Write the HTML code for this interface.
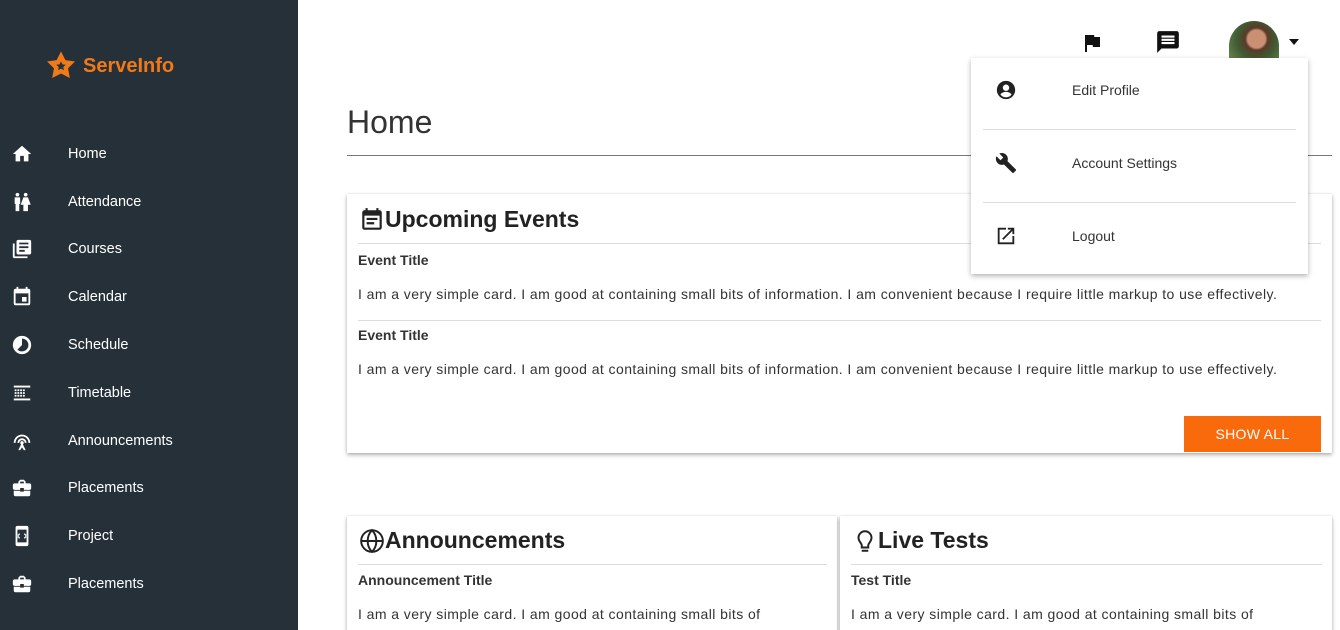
<!DOCTYPE html>
<html style="width:1340px;height:630px;overflow:hidden"><head><style>
*{box-sizing:border-box;margin:0;padding:0}
body{width:1340px;height:630px;overflow:hidden;background:#fff;font-family:"Liberation Sans",sans-serif;position:relative;color:#222}
.side{position:absolute;left:0;top:0;width:298px;height:630px;background:#263038}
.logo{position:absolute;left:45px;top:50px;display:flex;align-items:center;color:#f07a1a;font-weight:bold;font-size:20px}
.nav{position:absolute;left:0;top:130px}
.nav div{height:47.8px;display:flex;align-items:center;color:#fff;font-size:14.5px;position:relative}
.nav svg{position:absolute;left:11px;width:22px;height:22px;fill:#fff}
.nav span{position:absolute;left:68px}
.top svg{position:absolute}
h1{position:absolute;left:347px;top:104px;font-weight:normal;font-size:32px;color:#333}
.hr{position:absolute;left:347px;top:155px;width:985px;height:1px;background:#777}
.card{position:absolute;background:#fff;box-shadow:0 2px 4px rgba(0,0,0,.3),0 0 2px rgba(0,0,0,.1)}
.ct{position:absolute;left:12px;font-weight:bold;font-size:23px;display:flex;align-items:center;color:#222}
.sep{position:absolute;left:11px;height:1px;background:#ddd}
.t{position:absolute;left:11px;font-weight:bold;font-size:14px;color:#333}
.p{position:absolute;left:11px;font-size:14px;color:#333;white-space:nowrap;letter-spacing:.43px}
.btn{position:absolute;right:11px;bottom:0;width:137px;height:36px;background:#f96a0c;color:#fff;font-size:14px;display:flex;align-items:center;justify-content:center;letter-spacing:.3px}
.menu{position:absolute;left:971px;top:58px;width:337px;height:216px;background:#fff;box-shadow:0 2px 5px rgba(0,0,0,.3)}
.mi{position:absolute;left:0;width:100%;height:73px;font-size:14px;color:#333}
.mi span{position:absolute;left:101px;top:24px}
.mi svg{position:absolute;left:24px;top:21px;width:22px;height:22px}
.ms{position:absolute;left:12px;width:313px;height:1px;background:#ddd}
</style></head><body>
<div class="side">
 <div class="logo"><svg width="32" height="32" viewBox="0 0 24 24"><path fill="#f07a1a" d="M12 1l3.3 6.6 7.2 1-5.2 5.1 1.3 7.3L12 17.6 5.4 21l1.3-7.3L1.5 8.6l7.2-1z"/><path fill="#263038" d="M12 8.5l1.1 2.3 2.4.3-1.8 1.7.5 2.4-2.2-1.2-2.2 1.2.5-2.4-1.8-1.7 2.4-.3z"/></svg><span style="margin-left:6px">ServeInfo</span></div>
 <div class="nav">
  <div><svg viewBox="0 0 24 24"><path d="M10 20v-6h4v6h5v-8h3L12 3 2 12h3v8z"/></svg><span>Home</span></div>
  <div><svg viewBox="0 0 24 24"><circle cx="7" cy="4" r="2"/><circle cx="16" cy="4" r="2"/><path d="M4 7h6v7H9v8H5v-8H4zM13.5 7h5l3 8h-3v7h-5v-7h-3z"/></svg><span>Attendance</span></div>
  <div><svg viewBox="0 0 24 24"><path d="M4 6H2v14a2 2 0 002 2h14v-2H4zm16-4H8a2 2 0 00-2 2v12a2 2 0 002 2h12a2 2 0 002-2V4a2 2 0 00-2-2zm-1 9H9V9h10zm-4 4H9v-2h6zm4-8H9V5h10z"/></svg><span>Courses</span></div>
  <div><svg viewBox="0 0 24 24"><path d="M17 12h-5v5h5zM16 1v2H8V1H6v2H5a2 2 0 00-2 2v14a2 2 0 002 2h14a2 2 0 002-2V5a2 2 0 00-2-2h-1V1zm3 18H5V8h14z"/></svg><span>Calendar</span></div>
  <div><svg viewBox="0 0 24 24"><path d="M12 2a10 10 0 100 20 10 10 0 000-20zm0 17a7 7 0 01-5-2l5-5V5a7 7 0 010 14z"/></svg><span>Schedule</span></div>
  <div><svg viewBox="0 0 24 24"><path d="M3 4h18v2H3zM3 18h18v2H3zM4 8h2v2H4zm3 0h2v2H7zm3 0h2v2h-2zm3 0h2v2h-2zM4 11h2v2H4zm3 0h2v2H7zm3 0h2v2h-2zm3 0h2v2h-2zM4 14h2v2H4zm3 0h2v2H7zm3 0h2v2h-2zm3 0h2v2h-2z"/></svg><span>Timetable</span></div>
  <div><svg viewBox="0 0 24 24"><path d="M12 5a9 9 0 00-9 9h2a7 7 0 0114 0h2a9 9 0 00-9-9zm0 4a5 5 0 00-5 5h2a3 3 0 016 0h2a5 5 0 00-5-5zm0 3a2 2 0 00-1 3.7L8 22h2l2-3 2 3h2l-3-6.3A2 2 0 0012 12z"/></svg><span>Announcements</span></div>
  <div><svg viewBox="0 0 24 24"><path d="M10 16v-1H3v4a2 2 0 002 2h14a2 2 0 002-2v-4h-7v1zm10-9h-4V5l-2-2h-4L8 5v2H4a2 2 0 00-2 2v3a2 2 0 002 2h6v-2h4v2h6a2 2 0 002-2V9a2 2 0 00-2-2zm-6 0h-4V5h4z"/></svg><span>Placements</span></div>
  <div><svg viewBox="0 0 24 24"><path d="M7 1h10a2 2 0 012 2v18a2 2 0 01-2 2H7a2 2 0 01-2-2V3a2 2 0 012-2zm0 4v14h10V5zm2 4l-3 3 3 3 1-1-2-2 2-2zm6 0l-1 1 2 2-2 2 1 1 3-3z"/></svg><span>Project</span></div>
  <div><svg viewBox="0 0 24 24"><path d="M10 16v-1H3v4a2 2 0 002 2h14a2 2 0 002-2v-4h-7v1zm10-9h-4V5l-2-2h-4L8 5v2H4a2 2 0 00-2 2v3a2 2 0 002 2h6v-2h4v2h6a2 2 0 002-2V9a2 2 0 00-2-2zm-6 0h-4V5h4z"/></svg><span>Placements</span></div>
 </div>
</div>
<div class="top">
 <svg style="left:1080px;top:31px" width="24" height="24" viewBox="0 0 24 24"><path fill="#111" d="M14.4 6L14 4H5v17h2v-7h5.6l.4 2h7V6z"/></svg>
 <svg style="left:1155px;top:29px" width="26" height="26" viewBox="0 0 24 24"><path fill="#111" d="M20 2H4a2 2 0 00-2 2v18l4-4h14a2 2 0 002-2V4a2 2 0 00-2-2zM18 14H6v-2h12zm0-3H6V9h12zm0-3H6V6h12z"/></svg>
 <div style="position:absolute;left:1229px;top:21px;width:50px;height:40px;border-radius:25px 25px 0 0;background:radial-gradient(circle at 55% 45%,#c99074 0 25%,#5a3a28 32%,#3f5a33 55%,#6d8a52 100%);overflow:hidden"></div>
 <svg style="left:1287px;top:37px" width="14" height="10" viewBox="0 0 14 10"><path fill="#111" d="M2 2h10l-5 6z"/></svg>
</div>
<h1>Home</h1>
<div class="hr"></div>
<div class="card" style="left:347px;top:194px;width:985px;height:259px">
 <div class="ct" style="top:12px"><svg width="26" height="26" viewBox="0 0 24 24"><path fill="#222" d="M19 3h-1V1h-2v2H8V1H6v2H5a2 2 0 00-2 2v14a2 2 0 002 2h14a2 2 0 002-2V5a2 2 0 00-2-2zm0 16H5V8h14zM7 10h10v2H7zm0 4h7v2H7z"/></svg><span>Upcoming Events</span></div>
 <div class="sep" style="top:49px;width:963px"></div>
 <div class="t" style="top:58px">Event Title</div>
 <div class="p" style="top:92px">I am a very simple card. I am good at containing small bits of information. I am convenient because I require little markup to use effectively.</div>
 <div class="sep" style="top:126px;width:963px"></div>
 <div class="t" style="top:133px">Event Title</div>
 <div class="p" style="top:167px">I am a very simple card. I am good at containing small bits of information. I am convenient because I require little markup to use effectively.</div>
 <div class="btn" style="bottom:1px">SHOW ALL</div>
</div>
<div class="card" style="left:347px;top:516px;width:490px;height:130px">
 <div class="ct" style="top:11px"><svg width="26" height="26" viewBox="0 0 24 24" fill="none" stroke="#222" stroke-width="1.8"><circle cx="12" cy="12" r="10"/><path d="M2 12h20M12 2c3 3 4 6.5 4 10s-1 7-4 10c-3-3-4-6.5-4-10s1-7 4-10z"/></svg><span>Announcements</span></div>
 <div class="sep" style="top:48px;width:469px"></div>
 <div class="t" style="top:56px">Announcement Title</div>
 <div class="p" style="top:90px">I am a very simple card. I am good at containing small bits of</div>
</div>
<div class="card" style="left:840px;top:516px;width:492px;height:130px">
 <div class="ct" style="top:11px"><svg width="26" height="26" viewBox="0 0 24 24" fill="none" stroke="#222" stroke-width="1.8"><path d="M9 21h6M9 18h6v-2c0-2 3-3.5 3-7a6 6 0 00-12 0c0 3.5 3 5 3 7z"/></svg><span>Live Tests</span></div>
 <div class="sep" style="top:48px;width:471px"></div>
 <div class="t" style="top:56px">Test Title</div>
 <div class="p" style="top:90px">I am a very simple card. I am good at containing small bits of</div>
</div>
<div class="menu">
 <div class="mi" style="top:0"><svg viewBox="0 0 24 24"><path fill="#222" d="M12 2a10 10 0 100 20 10 10 0 000-20zm0 4a3.5 3.5 0 110 7 3.5 3.5 0 010-7zm0 14a8 8 0 01-6-3c.5-2 4-3 6-3s5.5 1 6 3a8 8 0 01-6 3z"/></svg><span>Edit Profile</span></div>
 <div class="ms" style="top:71px"></div>
 <div class="mi" style="top:73px"><svg viewBox="0 0 24 24"><path fill="#222" d="M22.7 19l-9.1-9.1c.9-2.3.4-5-1.5-6.9-2-2-5-2.4-7.4-1.3L9 6 6 9 1.6 4.7C.4 7.1.9 10.1 2.9 12.1c1.9 1.9 4.6 2.4 6.9 1.5l9.1 9.1c.4.4 1 .4 1.4 0l2.3-2.3c.5-.4.5-1.1.1-1.4z"/></svg><span>Account Settings</span></div>
 <div class="ms" style="top:144px"></div>
 <div class="mi" style="top:146px"><svg viewBox="0 0 24 24"><path fill="#222" d="M19 19H5V5h7V3H3v18h18v-9h-2zM14 3v2h3.6l-9.8 9.8 1.4 1.4L19 6.4V10h2V3z"/></svg><span>Logout</span></div>
</div>
</body></html>
